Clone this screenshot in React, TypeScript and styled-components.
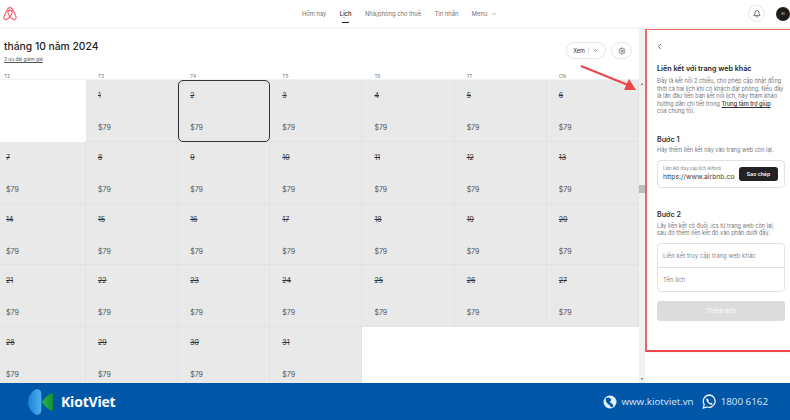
import styled, { createGlobalStyle } from "styled-components";
import { Bell, ChevronDown, ChevronLeft, Settings } from "lucide-react";

const GlobalStyle = createGlobalStyle`
  html, body {
    margin: 0;
    padding: 0;
    background: #fff;
  }
  body {
    font-family: Inter, "Liberation Sans", sans-serif;
    color: #222;
  }
  * {
    box-sizing: border-box;
  }
`;

const Page = styled.div`
  position: relative;
  width: 790px;
  height: 420px;
  display: flex;
  flex-direction: column;
  overflow: hidden;
`;

const TopBar = styled.header`
  flex: none;
  height: 29px;
  display: flex;
  align-items: center;
  padding: 0 0 0 3px;
  border-bottom: 2px solid #f6f6f6;
`;

const Nav = styled.nav`
  margin-left: 285px;
  display: flex;
  gap: 13.5px;
  font-size: 5.8px;
  color: #717171;
`;

const NavItem = styled.span<{ $active?: boolean }>`
  position: relative;
  display: flex;
  align-items: center;
  gap: 4px;
  color: ${(p) => (p.$active ? "#222" : "#717171")};
  font-weight: ${(p) => (p.$active ? 500 : 400)};

  &::after {
    content: "";
    display: ${(p) => (p.$active ? "block" : "none")};
    position: absolute;
    left: 2px;
    right: 2px;
    bottom: -6px;
    height: 1px;
    background: #222;
  }
`;

const BellButton = styled.div`
  margin-left: auto;
  width: 17px;
  height: 17px;
  border: 1px solid #e4e4e4;
  border-radius: 50%;
  display: flex;
  align-items: center;
  justify-content: center;
  color: #222;
`;

const Avatar = styled.div`
  margin-left: 11px;
  width: 14px;
  height: 14px;
  border-radius: 50%;
  background: #1d1d1d;
  color: #fff;
  font-size: 4px;
  display: flex;
  align-items: center;
  justify-content: center;
`;

const Main = styled.main`
  flex: 1;
  min-height: 0;
  display: flex;
  overflow: hidden;
`;

const CalendarArea = styled.section`
  width: 639px;
  flex: none;
  display: flex;
  flex-direction: column;
`;

const CalendarHead = styled.div`
  flex: none;
  height: 41px;
  padding: 10px 7px 0 4px;
  display: flex;
  justify-content: space-between;
`;

const Title = styled.h1`
  margin: 0;
  font-size: 10.3px;
  line-height: 15px;
  font-weight: 500;
  color: #222;
`;

const Offers = styled.a`
  display: block;
  margin-top: 2px;
  font-size: 4.8px;
  line-height: 6px;
  color: #555;
  text-decoration: underline;
`;

const HeadActions = styled.div`
  display: flex;
  gap: 5px;
  margin-top: 3px;
`;

const ViewButton = styled.div`
  width: 40px;
  height: 17px;
  border: 1px solid #e6e6e6;
  border-radius: 9px;
  display: flex;
  align-items: center;
  justify-content: center;
  gap: 3px;
  font-size: 5.5px;
  color: #333;
`;

const Separator = styled.span`
  width: 1px;
  height: 5px;
  background: #ddd;
`;

const RoundButton = styled.div`
  width: 21px;
  height: 17px;
  border: 1px solid #e6e6e6;
  border-radius: 9px;
  display: flex;
  align-items: center;
  justify-content: center;
  color: #555;
`;

const WeekRow = styled.div`
  flex: none;
  height: 10px;
  display: grid;
  grid-template-columns: 86px repeat(6, 92.17px);
  font-size: 4.8px;
  line-height: 12px;
  color: #777;
  border-bottom: 1px solid #f2f2f2;
`;

const WeekDay = styled.span`
  padding-left: 12px;

  &:first-child {
    padding-left: 4px;
  }
`;

const DayGrid = styled.div`
  display: grid;
  grid-template-columns: 86px repeat(6, 92.17px);
  grid-auto-rows: 61.8px;
`;

const DayCell = styled.div<{ $empty?: boolean; $selected?: boolean }>`
  position: relative;
  background: ${(p) => (p.$empty ? "#fff" : "#e9e9e9")};
  border-right: 1px solid ${(p) => (p.$empty ? "#fff" : "#e2e2e2")};
  border-bottom: 1px solid ${(p) => (p.$empty ? "#fff" : "#e2e2e2")};
  padding: 12px 0 0 12px;
  color: #444;

  &:nth-child(7n + 1) {
    padding-left: 6px;
  }

  ${(p) =>
    p.$selected &&
    `
    &::after {
      content: "";
      position: absolute;
      inset: 0 -1px -1px 0;
      border: 1.2px solid #333;
      border-radius: 5px;
    }
  `}
`;

const DayNumber = styled.div`
  font-size: 7px;
  line-height: 8px;
  color: #333;
  text-decoration: line-through;
`;

const Price = styled.div`
  margin-top: 24px;
  font-size: 7px;
  line-height: 8px;
  color: #555;
`;

const ScrollTrack = styled.div`
  position: relative;
  flex: none;
  width: 6px;
  background: #f1f1f1;
`;

const ScrollThumb = styled.div`
  position: absolute;
  left: 0;
  top: 156px;
  width: 6px;
  height: 8px;
  background: #bdbdbd;
`;

const ScrollCaret = styled.div<{ $down?: boolean }>`
  position: absolute;
  left: 1.5px;
  ${(p) => (p.$down ? "bottom: 3px;" : "top: 54px;")}
  border-left: 1.5px solid transparent;
  border-right: 1.5px solid transparent;
  ${(p) => (p.$down ? "border-top: 2px solid #555;" : "border-bottom: 2px solid #555;")}
`;

const SidePanel = styled.aside`
  flex: none;
  width: 145px;
  height: 323px;
  background: #fff;
  border-left: 2px solid #f06464;
  border-top: 1.5px solid #f06464;
  border-bottom: 2px solid #f04848;
  padding: 12px 5px 0 10px;
  box-shadow: -1px 0 1px rgba(0, 0, 0, 0.2);
  display: flex;
  flex-direction: column;
`;

const BackIcon = styled(ChevronLeft)`
  margin-left: -2px;
  color: #444;
`;

const PanelTitle = styled.h2`
  margin: 13px 0 0;
  font-size: 7.2px;
  line-height: 10px;
  font-weight: 600;
  color: #222;
  white-space: nowrap;
`;

const PanelText = styled.p<{ $gap?: number }>`
  margin: ${(p) => p.$gap ?? 3}px 0 0;
  font-size: 5.6px;
  line-height: 7.6px;
  color: #777;
  white-space: nowrap;
`;

const HelpLink = styled.a`
  color: #333;
  font-weight: 500;
  text-decoration: underline;
`;

const StepTitle = styled.h3<{ $gap: number }>`
  margin: ${(p) => p.$gap}px 0 0;
  font-size: 7.2px;
  line-height: 10px;
  font-weight: 600;
  color: #333;
`;

const LinkBox = styled.div`
  margin-top: 5px;
  width: 128px;
  height: 28px;
  border: 1px solid #e2e2e2;
  border-radius: 4px;
  padding: 4px 6px 0 5px;
  display: flex;
  justify-content: space-between;
  align-items: center;
`;

const LinkField = styled.div`
  width: 72px;
  overflow: hidden;
  margin-top: -4px;
`;

const FieldLabel = styled.div`
  font-size: 4.4px;
  line-height: 6px;
  color: #777;
  white-space: nowrap;
`;

const FieldValue = styled.div`
  font-size: 6.8px;
  line-height: 9px;
  color: #444;
  white-space: nowrap;
`;

const CopyButton = styled.div`
  width: 39px;
  height: 14px;
  margin-top: -4px;
  border-radius: 3px;
  background: #222;
  color: #fff;
  font-size: 5.2px;
  font-weight: 600;
  display: flex;
  align-items: center;
  justify-content: center;
`;

const InputGroup = styled.div`
  margin-top: 5px;
  width: 128px;
  height: 49px;
  border: 1px solid #e2e2e2;
  border-radius: 4px;
  display: grid;
  grid-template-rows: 23px 1fr;
`;

const InputRow = styled.div`
  padding-left: 5px;
  display: flex;
  align-items: center;
  font-size: 6px;
  color: #888;

  & + & {
    border-top: 1px solid #dedede;
  }
`;

const AddButton = styled.div`
  margin-top: 9px;
  width: 128px;
  height: 20px;
  border-radius: 3px;
  background: #dcdcdc;
  color: #f6f6f6;
  font-size: 6.4px;
  font-weight: 600;
  display: flex;
  align-items: center;
  justify-content: center;
`;

const Banner = styled.footer`
  flex: none;
  height: 37px;
  background: #0057a8;
  padding: 0 22px 0 28px;
  display: flex;
  align-items: center;
  color: #fff;
`;

const BrandName = styled.span`
  margin-left: 8px;
  font-size: 14px;
  font-weight: 700;
  letter-spacing: -0.2px;
  font-family: "Open Sans", Inter, sans-serif;
`;

const Contact = styled.div<{ $first?: boolean }>`
  margin-left: ${(p) => (p.$first ? "auto" : "8px")};
  display: flex;
  align-items: center;
  gap: 4px;
  font-size: 9.8px;
  color: #dbe8f6;
  font-family: "Open Sans", sans-serif;
`;

const Arrow = styled.svg`
  position: absolute;
  left: 578px;
  top: 64px;
  width: 60px;
  height: 32px;
`;

const weekDays = ["T2", "T3", "T4", "T5", "T6", "T7", "CN"];
const days = Array.from({ length: 35 }, (_, i) => (i >= 1 && i <= 31 ? i : 0));

function AirbnbLogo() {
  return (
    <svg width="14" height="14" viewBox="0 0 32 32" fill="none" stroke="#ff5a6a" strokeWidth="2.6">
      <path d="M16 22c-3-4-5-7.500-5-10a5 5 0 0 1 10 0c0 2.500-2 6-5 10zm0 0c3 4 6 7 9 7 3.500 0 6-3.500 4.500-7.500C27 15 23 7 20.500 3.500 19 2 17.500 1.500 16 1.500S13 2 11.500 3.500C9 7 5 15 2.500 21.500 1 25.500 3.500 29 7 29c3 0 6-3 9-7z" />
    </svg>
  );
}

function KiotVietLogo() {
  return (
    <svg width="25" height="26" viewBox="0 0 25 26">
      <defs>
        <linearGradient id="kvBlue" x1="0" x2="1" y1="0" y2="0">
          <stop offset="0" stopColor="#1f7fd6" />
          <stop offset="1" stopColor="#4ab4ee" />
        </linearGradient>
        <linearGradient id="kvGreen" x1="0" x2="1" y1="0" y2="0">
          <stop offset="0" stopColor="#2fb14a" />
          <stop offset="1" stopColor="#149034" />
        </linearGradient>
      </defs>
      <path d="M9 0C3 2 0 8 0 13s3 11 9 13c2.500-.8 3.500-1.500 4-3 .6-4 .6-16 0-20-.5-1.500-1.500-2.200-4-3z" fill="url(#kvBlue)" />
      <path d="M25 4v18c-4-1-8-4-11-9 3-5 7-8 11-9z" fill="url(#kvGreen)" />
    </svg>
  );
}

function GlobeIcon() {
  return (
    <svg width="14" height="14" viewBox="0 0 14 14">
      <circle cx="7" cy="7" r="6.500" fill="#e8f0f8" />
      <path d="M3 3c2-1 4-.5 5 1s-1 2-1 3 2 1 3 3-1 2.500-2 2c-1-2-2-2-3-3S2 6 3 3z" fill="#0057a8" />
    </svg>
  );
}

function PhoneBubbleIcon() {
  return (
    <svg width="15" height="15" viewBox="0 0 15 15" fill="none">
      <path d="M7.500 1a6.200 6.200 0 0 0-5.300 9.400L1.300 14l3.500-1a6.200 6.200 0 1 0 2.700-12z" stroke="#e8f0f8" strokeWidth="1.300" />
      <path d="M5 4.200c-.8.600-1 1.600-.4 2.800.7 1.500 2 2.800 3.500 3.500 1.200.5 2.200.3 2.800-.6l-1.600-1.300-1 .6c-.8-.4-1.500-1.100-1.900-1.900l.6-1z" fill="#e8f0f8" />
    </svg>
  );
}

export default function App() {
  return (
    <>
      <GlobalStyle />
      <Page>
        <TopBar>
          <AirbnbLogo />
          <Nav>
            <NavItem>Hôm nay</NavItem>
            <NavItem $active>Lịch</NavItem>
            <NavItem>Nhà/phòng cho thuê</NavItem>
            <NavItem>Tin nhắn</NavItem>
            <NavItem>
              Menu <ChevronDown size={6} />
            </NavItem>
          </Nav>
          <BellButton>
            <Bell size={8} />
          </BellButton>
          <Avatar>H</Avatar>
        </TopBar>
        <Main>
          <CalendarArea>
            <CalendarHead>
              <div>
                <Title>tháng 10 năm 2024</Title>
                <Offers>3 ưu đãi giảm giá</Offers>
              </div>
              <HeadActions>
                <ViewButton>
                  Xem <Separator /> <ChevronDown size={7} />
                </ViewButton>
                <RoundButton>
                  <Settings size={8} />
                </RoundButton>
              </HeadActions>
            </CalendarHead>
            <WeekRow>
              {weekDays.map((d) => (
                <WeekDay key={d}>{d}</WeekDay>
              ))}
            </WeekRow>
            <DayGrid>
              {days.map((d, i) =>
                d ? (
                  <DayCell key={i} $selected={d === 2}>
                    <DayNumber>{d}</DayNumber>
                    <Price>$79</Price>
                  </DayCell>
                ) : (
                  <DayCell key={i} $empty />
                ),
              )}
            </DayGrid>
          </CalendarArea>
          <ScrollTrack>
            <ScrollCaret />
            <ScrollThumb />
            <ScrollCaret $down />
          </ScrollTrack>
          <SidePanel>
            <BackIcon size={9} />
            <PanelTitle>Liên kết với trang web khác</PanelTitle>
            <PanelText $gap={4}>
              Đây là kết nối 2 chiều, cho phép cập nhật đồng
              <br />
              thời cả hai lịch khi có khách đặt phòng. Nếu đây
              <br />
              là lần đầu tiên bạn kết nối lịch, hãy tham khảo
              <br />
              hướng dẫn chi tiết trong <HelpLink>Trung tâm trợ giúp</HelpLink>
              <br />
              của chúng tôi.
            </PanelText>
            <StepTitle $gap={19}>Bước 1</StepTitle>
            <PanelText $gap={2}>Hãy thêm liên kết này vào trang web còn lại.</PanelText>
            <LinkBox>
              <LinkField>
                <FieldLabel>Liên kết truy cập lịch Airbnb</FieldLabel>
                <FieldValue>https://www.airbnb.com</FieldValue>
              </LinkField>
              <CopyButton>Sao chép</CopyButton>
            </LinkBox>
            <StepTitle $gap={22}>Bước 2</StepTitle>
            <PanelText>
              Lấy liên kết có đuôi .ics từ trang web còn lại,
              <br />
              sau đó thêm liên kết đó vào phần dưới đây.
            </PanelText>
            <InputGroup>
              <InputRow>Liên kết truy cập trang web khác</InputRow>
              <InputRow>Tên lịch</InputRow>
            </InputGroup>
            <AddButton>Thêm lịch</AddButton>
          </SidePanel>
        </Main>
        <Banner>
          <KiotVietLogo />
          <BrandName>KiotViet</BrandName>
          <Contact $first>
            <GlobeIcon />
            www.kiotviet.vn
          </Contact>
          <Contact>
            <PhoneBubbleIcon />
            1800 6162
          </Contact>
        </Banner>
        <Arrow viewBox="0 0 60 32">
          <path d="M3 2 L50 21" stroke="#e8474a" strokeWidth="2" fill="none" />
          <path d="M58 26 L46 26 L51 15 Z" fill="#e8474a" />
        </Arrow>
      </Page>
    </>
  );
}
